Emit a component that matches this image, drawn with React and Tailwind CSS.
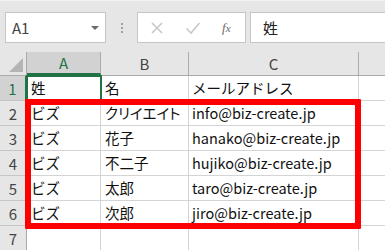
import React from "react";

const rows = [
  ["姓", "名", "メールアドレス"],
  ["ビズ", "クリイエイト", "info@biz-create.jp"],
  ["ビズ", "花子", "hanako@biz-create.jp"],
  ["ビズ", "不二子", "hujiko@biz-create.jp"],
  ["ビズ", "太郎", "taro@biz-create.jp"],
  ["ビズ", "次郎", "jiro@biz-create.jp"],
  ["", "", ""],
];

export default function App() {
  return (
    <div
      className="w-[385px] h-[250px] overflow-hidden bg-[#e6e6e6] relative"
      style={{ fontFamily: '"Noto Sans CJK JP", "Noto Sans", sans-serif' }}
    >
      {/* formula bar */}
      <div className="h-[52px] pt-[11px] flex items-start border-t border-[#f2f2f2]">
        <div className="ml-[5px] w-[101px] h-[31px] bg-white border border-[#c6c6c6] flex items-center justify-between pl-[6px] pr-[6px]">
          <span className="text-[15px] text-[#444] leading-none">A1</span>
          <span className="w-0 h-0 border-l-[4px] border-r-[4px] border-t-[4px] border-l-transparent border-r-transparent border-t-[#6b6b6b]" />
        </div>
        <div className="w-[31px] h-[31px] flex flex-col items-center justify-center gap-[2px]">
          <span className="w-[2px] h-[2px] bg-[#a0a0a0]" />
          <span className="w-[2px] h-[2px] bg-[#a0a0a0]" />
          <span className="w-[2px] h-[2px] bg-[#a0a0a0]" />
        </div>
        <div className="w-[109px] h-[31px] bg-white border border-[#c6c6c6] flex items-center">
          <svg width="14" height="14" viewBox="0 0 14 14" className="ml-[12px]">
            <path d="M2 2 L12 12 M12 2 L2 12" stroke="#c8c8c8" strokeWidth="1.6" fill="none" />
          </svg>
          <svg width="16" height="14" viewBox="0 0 16 14" className="ml-[21px]">
            <path d="M1.5 7.5 L6 12 L14.5 2" stroke="#c8c8c8" strokeWidth="1.6" fill="none" />
          </svg>
          <span
            className="ml-[21px] text-[13px] italic text-[#6a6a6a] leading-none"
            style={{ fontFamily: '"Liberation Serif", serif' }}
          >
            f<span className="text-[11px]">x</span>
          </span>
        </div>
        <div className="ml-[4px] flex-1 h-[31px] bg-white border border-[#c6c6c6] border-r-0 flex items-center pl-[12px]">
          <span className="text-[15px] text-[#222] leading-none">姓</span>
        </div>
      </div>

      {/* grid */}
      <div className="relative">
        <div className="flex h-[24px] border-b border-[#ababab]">
          <div className="w-[27px] border-r border-[#ababab] relative">
            <span
              className="absolute right-[3px] bottom-[3px] w-0 h-0"
              style={{ borderBottom: "14px solid #b4b4b4", borderLeft: "14px solid transparent" }}
            />
          </div>
          <div className="w-[74px] bg-[#d2d2d2] border-r border-[#ababab] border-b-2 border-b-[#217346] flex items-center justify-center text-[15px] text-[#217346] leading-none">A</div>
          <div className="w-[88px] border-r border-[#ababab] flex items-center justify-center text-[15px] text-[#444] leading-none">B</div>
          <div className="w-[170px] border-r border-[#ababab] flex items-center justify-center text-[15px] text-[#444] leading-none">C</div>
          <div className="flex-1" />
        </div>
        {rows.map((r, i) => (
          <div key={i} className="flex h-[25px] bg-white">
            <div
              className={
                i === 0
                  ? "w-[27px] bg-[#d2d2d2] border-r-2 border-r-[#217346] border-b border-b-[#c6c6c6] flex items-center justify-center text-[15px] text-[#217346] leading-none"
                  : "w-[27px] bg-[#e6e6e6] border-r border-r-[#ababab] border-b border-b-[#c6c6c6] flex items-center justify-center text-[15px] text-[#444] leading-none"
              }
            >
              {i + 1}
            </div>
            <div className="w-[74px] border-r border-b border-[#d4d4d4] flex items-center pl-[4px] text-[14.5px] text-[#111] leading-none whitespace-nowrap">{r[0]}</div>
            <div className="w-[88px] border-r border-b border-[#d4d4d4] flex items-center pl-[4px] text-[14.5px] text-[#111] leading-none whitespace-nowrap [font-feature-settings:'palt']">{r[1]}</div>
            <div className="w-[170px] border-r border-b border-[#d4d4d4] flex items-center pl-[3px] text-[14.5px] text-[#111] leading-none whitespace-nowrap">{r[2]}</div>
            <div className="flex-1 border-b border-[#d4d4d4]" />
          </div>
        ))}
        {/* active cell */}
        <div className="absolute left-[26px] top-[23px] w-[76px] h-[27px] border-2 border-[#217346] pointer-events-none" />
        {/* red highlight */}
        <div className="absolute left-[25px] top-[47px] w-[336px] h-[130px] border-[6px] border-[#ff0000] rounded-[1px] pointer-events-none" />
      </div>
    </div>
  );
}
